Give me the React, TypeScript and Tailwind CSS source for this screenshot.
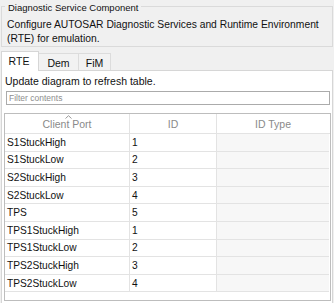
import React from 'react';

const rows: [string, string][] = [
  ['S1StuckHigh', '1'],
  ['S1StuckLow', '2'],
  ['S2StuckHigh', '3'],
  ['S2StuckLow', '4'],
  ['TPS', '5'],
  ['TPS1StuckHigh', '1'],
  ['TPS1StuckLow', '2'],
  ['TPS2StuckHigh', '3'],
  ['TPS2StuckLow', '4'],
];

const tabs = ['RTE', 'Dem', 'FiM'];
const tabWidths = ['w-[38px]', 'w-[40px]', 'w-[32px]'];

export default function App() {
  return (
    <div className="w-[334px] h-[303px] overflow-hidden bg-[#f0f0f0] font-['Liberation_Sans',Arial,sans-serif] text-[10px] text-[#111]">
      {/* group box */}
      <div className="relative mx-[1px] mt-[6px] h-[41px] whitespace-nowrap border border-[#dadada] px-[5px] pt-[11px] text-[10.3px] leading-[13.5px]">
        <span className="absolute left-[3px] top-[-6px] bg-[#f0f0f0] px-[3px] text-[9.5px] leading-[13px]">
          Diagnostic Service Component
        </span>
        <p>Configure AUTOSAR Diagnostic Services and Runtime Environment</p>
        <p>(RTE) for emulation.</p>
      </div>

      {/* tabs */}
      <div className="mt-[4px] flex h-[19px] items-end px-[1px]">
        {tabs.map((t, i) => (
          <div
            key={t}
            className={
              i === 0
                ? `relative z-10 -mb-px flex h-[20px] ${tabWidths[i]} items-center justify-center border border-b-0 border-[#d6d6d6] bg-white pr-[2px] text-[10.5px] leading-[13px]`
                : `flex h-[17px] ${tabWidths[i]} items-center justify-center border-r border-t border-[#dcdcdc] bg-[#f2f2f2] pt-[2px] text-[10.5px] leading-[13px]`
            }
          >
            {t}
          </div>
        ))}
      </div>

      {/* tab panel */}
      <div className="mx-[1px] h-[240px] border border-[#d6d6d6] bg-white pl-[3px] pt-[4px]">
        <p className="text-[10.5px] leading-[13px]">Update diagram to refresh table.</p>
        <div className="ml-[1px] mt-[3px] flex h-[14px] w-[324px] items-center border border-[#ababab] bg-white px-[2px]">
          <span className="text-[8.5px] leading-none text-[#8e8e8e]">Filter contents</span>
        </div>

        {/* table */}
        <div className="-ml-[1px] mt-[8px] flex h-[188px] w-[327px] flex-col border border-[#bdbdbd] bg-white">
          <div className="flex h-[20px] shrink-0 border-b border-[#e3e3e3] text-[10.5px] leading-[13px] text-[#8a8a8a]">
            <div className="relative flex w-[125px] items-center justify-center border-r border-[#e3e3e3] pt-[2px]">
              <svg
                className="absolute left-[60px] top-[1px]"
                width="7"
                height="4"
                viewBox="0 0 7 4"
                fill="none"
                stroke="#9a9a9a"
                strokeWidth="1"
              >
                <path d="M0.5 3.5 L3.5 0.7 L6.5 3.5" />
              </svg>
              Client Port
            </div>
            <div className="flex w-[87px] items-center justify-center border-r border-[#e3e3e3] pt-[2px]">ID</div>
            <div className="flex w-[112px] items-center justify-center pt-[2px]">ID Type</div>
          </div>
          {rows.map(([name, id]) => (
            <div key={name} className="flex h-[17.6px] shrink-0 text-[10.2px] leading-[13px]">
              <div className="flex w-[125px] items-center border-b border-r border-[#e3e3e3] pl-[2px]">{name}</div>
              <div className="flex w-[87px] items-center border-b border-r border-[#e3e3e3] pl-[2px]">{id}</div>
              <div className="w-[112px] border-b border-[#e3e3e3] bg-[#f7f7f7]" />
            </div>
          ))}
        </div>
      </div>
    </div>
  );
}
